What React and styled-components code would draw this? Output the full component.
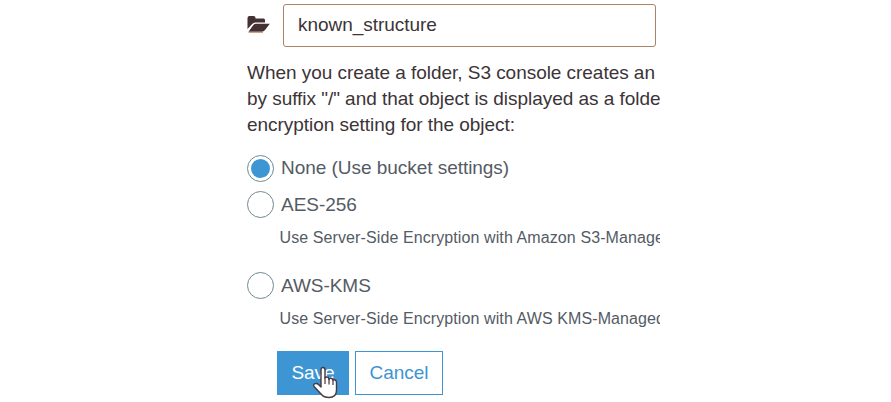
import React from "react";
import styled, { createGlobalStyle } from "styled-components";

const GlobalStyle = createGlobalStyle`
  * { box-sizing: border-box; }
  body {
    margin: 0;
    background: #fff;
    font-family: "Liberation Sans", Arial, sans-serif;
    font-size: 19px;
    letter-spacing: -0.04px;
    color: #3c3437;
  }
`;

const Panel = styled.main`
  width: 413px;
  height: 402px;
  margin-left: 247px;
  padding-top: 4px;
  overflow: hidden;
  white-space: nowrap;
`;

const NameRow = styled.div`
  display: flex;
  align-items: flex-start;
  gap: 13px;
  height: 43px;
`;

const FolderIcon = styled.svg`
  flex: none;
  width: 23px;
  height: 17px;
  margin-top: 12px;
`;

const NameInput = styled.input`
  width: 373px;
  height: 43px;
  padding: 0 14px 2px;
  border: 1px solid #a98467;
  border-radius: 3px;
  outline: none;
  background: #fff;
  color: #3c3437;
  font: inherit;
  letter-spacing: inherit;
`;

const Note = styled.p`
  margin: 13px 0 17px;
  line-height: 26px;
`;

const NoteLine = styled.span`
  display: block;
`;

const Option = styled.label`
  display: flex;
  align-items: center;
  gap: 7px;
  height: 27px;
  color: #545b64;
  margin-bottom: ${(p) => (p.$compact ? 9 : 0)}px;
`;

const OptionText = styled.span`
  line-height: 24px;
  padding-top: ${(p) => (p.$lowered ? 1 : 0)}px;
  margin-bottom: ${(p) => (p.$lowered ? 0 : 1)}px;
`;

const Radio = styled.span`
  display: grid;
  place-items: center;
  flex: none;
  width: 27px;
  height: 27px;
  border: 1px solid #70898f;
  border-radius: 50%;

  &::after {
    content: "";
    width: 19px;
    height: 19px;
    border-radius: 50%;
    background: ${(p) => (p.$checked ? "#3d95d3" : "transparent")};
  }
`;

const Hint = styled.div`
  height: 54px;
  padding: 9px 0 0 32.5px;
  font-size: 16px;
  letter-spacing: 0.1px;
  line-height: 22px;
  color: #545b64;
`;

const Actions = styled.div`
  display: flex;
  gap: 6px;
  margin: -2px 0 0 30px;
`;

const Button = styled.button`
  position: relative;
  width: ${(p) => (p.$primary ? 72 : 88)}px;
  height: 44px;
  padding: 0 0 1px;
  border: 1px solid #3d95d3;
  background: ${(p) => (p.$primary ? "#3d95d3" : "#fff")};
  color: ${(p) => (p.$primary ? "#fff" : "#3d95d3")};
  font: inherit;
  letter-spacing: inherit;
`;

const Pointer = styled.svg`
  position: absolute;
  left: 34px;
  top: 14px;
  width: 26px;
  height: 34px;
`;

export default function App() {
  return (
    <>
      <GlobalStyle />
      <Panel>
        <NameRow>
          <FolderIcon viewBox="0 0 23 17" fill="#443033">
            <path d="M0.5 13V2Q0.5 0 2.5 0H6.5Q8.5 0 8.5 2V2.5H16.5Q18 2.5 18 4V6.5H8.5Q6.5 6.5 5.2 8Z" />
            <path d="M8.7 7.7H22.8L18 14Q16.8 15.8 14.8 15.8H1.5L5.8 9.8Q7 7.7 8.7 7.7Z" />
            <path d="M1.5 16.3H16" stroke="#c48a6e" strokeWidth="1" />
          </FolderIcon>
          <NameInput aria-label="Folder name" defaultValue="known_structure" />
        </NameRow>
        <Note>
          <NoteLine>When you create a folder, S3 console creates an</NoteLine>
          <NoteLine>by suffix "/" and that object is displayed as a folde</NoteLine>
          <NoteLine>encryption setting for the object:</NoteLine>
        </Note>
        <Option $compact>
          <Radio $checked />
          <OptionText>None (Use bucket settings)</OptionText>
        </Option>
        <Option>
          <Radio />
          <OptionText $lowered>AES-256</OptionText>
        </Option>
        <Hint>Use Server-Side Encryption with Amazon S3-Manage</Hint>
        <Option>
          <Radio />
          <OptionText $lowered>AWS-KMS</OptionText>
        </Option>
        <Hint>Use Server-Side Encryption with AWS KMS-Managed</Hint>
        <Actions>
          <Button $primary>
            Save
            <Pointer viewBox="0 0 26 34">
              <path
                d="M9 19V4Q9 1.5 11 1.5Q13 1.5 13 4V12Q13.5 10.8 15 11Q17 11.2 17 13.5Q17.5 12 19 12.2Q21 12.5 21 14.5Q21.5 13.5 22.7 13.8Q24.5 14.2 24.5 16.5V24Q24.5 31.5 17 31.5Q12 31.5 9.5 28.5L2 20.5Q1 18.5 3 17.7Q5 17 6.5 18.5L9 21Z"
                fill="#fff"
                stroke="#49383f"
                strokeWidth="1.4"
                strokeLinejoin="round"
              />
              <path
                d="M13 11V18M17 13V18.5M21 14.5V19"
                fill="none"
                stroke="#49383f"
                strokeWidth="1.2"
              />
            </Pointer>
          </Button>
          <Button>Cancel</Button>
        </Actions>
      </Panel>
    </>
  );
}
